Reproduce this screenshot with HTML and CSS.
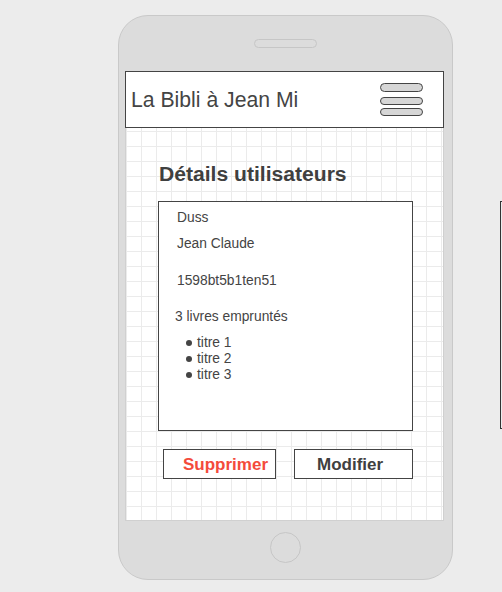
FILE: index.html
```html
<!DOCTYPE html>
<html lang="fr">
<head>
<meta charset="utf-8">
<title>La Bibli à Jean Mi</title>
<link rel="stylesheet" href="styles.css">
</head>
<body>
<div class="canvas">
  <div class="phone">
    <div class="speaker"></div>
    <div class="screen">
      <header class="topbar">
        <span class="brand">La Bibli à Jean Mi</span>
        <div class="burger">
          <span class="pill"></span>
          <span class="pill"></span>
          <span class="pill"></span>
        </div>
      </header>
      <main class="content">
        <h1 class="title">Détails utilisateurs</h1>
        <section class="card">
          <p class="field name">Duss</p>
          <p class="field firstname">Jean Claude</p>
          <p class="field code">1598bt5b1ten51</p>
          <p class="field count">3 livres empruntés</p>
          <ul class="books">
            <li>titre 1</li>
            <li>titre 2</li>
            <li>titre 3</li>
          </ul>
        </section>
        <div class="actions">
          <button class="btn btn-delete">Supprimer</button>
          <button class="btn btn-edit">Modifier</button>
        </div>
      </main>
    </div>
    <div class="home"></div>
  </div>
  <div class="side-frame"></div>
</div>
</body>
</html>
```

FILE: styles.css
```css
* {
  box-sizing: border-box;
}

html,
body {
  margin: 0;
  padding: 0;
  width: 502px;
  height: 592px;
  overflow: hidden;
  background: #ececec;
  font-family: "Liberation Sans", Arial, sans-serif;
  color: #444;
}

.canvas {
  display: flex;
  align-items: flex-start;
  padding: 15px 0 0 118px;
}

.phone {
  flex-shrink: 0;
  width: 335px;
  height: 565px;
  border: 1px solid #c9c9c9;
  border-radius: 30px;
  background: #dcdcdc;
  display: flex;
  flex-direction: column;
  align-items: flex-start;
}

.speaker {
  align-self: center;
  width: 63px;
  height: 9px;
  margin-top: 23px;
  border: 1px solid #c6c6c6;
  border-radius: 5px;
  background: #dcdcdc;
}

.screen {
  margin-top: 23px;
  margin-left: 6px;
  width: 319px;
  display: flex;
  flex-direction: column;
}

.topbar {
  height: 57px;
  border: 1px solid #444;
  background: #fff;
  display: flex;
  align-items: center;
  justify-content: space-between;
  padding: 1px 20px 0 5px;
}

.brand {
  font-size: 21.2px;
  line-height: 24px;
  color: #444;
}

.burger {
  display: flex;
  flex-direction: column;
  margin-top: -1px;
}

.pill {
  display: block;
  width: 43px;
  height: 8px;
  border: 1px solid #444;
  border-radius: 5px;
  background: #d6d6d6;
}

.pill:first-child {
  height: 9px;
}

.pill:nth-child(2) {
  margin-top: 5px;
}

.pill:nth-child(3) {
  margin-top: 3px;
}

.content {
  height: 393px;
  border: 1px solid #d0d0d0;
  border-top: none;
  background-color: #fff;
  background-image:
    linear-gradient(to right, #ebebeb 1px, transparent 1px),
    linear-gradient(to bottom, #ebebeb 1px, transparent 1px);
  background-size: 15px 15px;
  background-position: 0 3px;
  display: flex;
  flex-direction: column;
  align-items: flex-start;
}

.title {
  margin: 34px 0 0 33px;
  font-size: 21.1px;
  line-height: 24px;
  font-weight: bold;
  color: #404040;
}

.card {
  margin: 15px 0 0 32px;
  width: 255px;
  height: 230px;
  border: 1px solid #444;
  background: #fff;
  padding: 8px 0 0 18px;
}

.field {
  margin: 0;
  font-size: 13.8px;
  line-height: 16px;
  color: #444;
}

.firstname {
  margin-top: 10px;
}

.code {
  margin-top: 21px;
}

.count {
  margin-top: 20px;
  margin-left: -2px;
}

.books {
  list-style: none;
  margin: 10px 0 0 0;
  padding: 0 0 0 9px;
  font-size: 13.8px;
  line-height: 16px;
  color: #444;
}

.books li::before {
  content: "";
  display: inline-block;
  width: 6px;
  height: 6px;
  margin-right: 5px;
  border-radius: 50%;
  background: #444;
  vertical-align: 1px;
}

.actions {
  display: flex;
  gap: 18px;
  margin: 18px 0 0 37px;
}

.btn {
  height: 30px;
  border: 1px solid #444;
  background: #fff;
  font-family: "Liberation Sans", Arial, sans-serif;
  font-size: 17px;
  font-weight: bold;
  line-height: 20px;
  text-align: left;
  padding: 2px 0 0 0;
  cursor: pointer;
}

.btn-delete {
  width: 113px;
  padding-left: 19px;
  color: #f44b3b;
}

.btn-edit {
  width: 119px;
  padding-left: 22px;
  color: #404040;
}

.home {
  align-self: center;
  width: 31px;
  height: 31px;
  margin-top: 11px;
  border: 1px solid #c6c6c6;
  border-radius: 50%;
}

.side-frame {
  flex-shrink: 0;
  width: 2px;
  height: 228px;
  margin: 186px 0 0 47px;
  border: 1px solid #333;
  border-right: none;
}
```
